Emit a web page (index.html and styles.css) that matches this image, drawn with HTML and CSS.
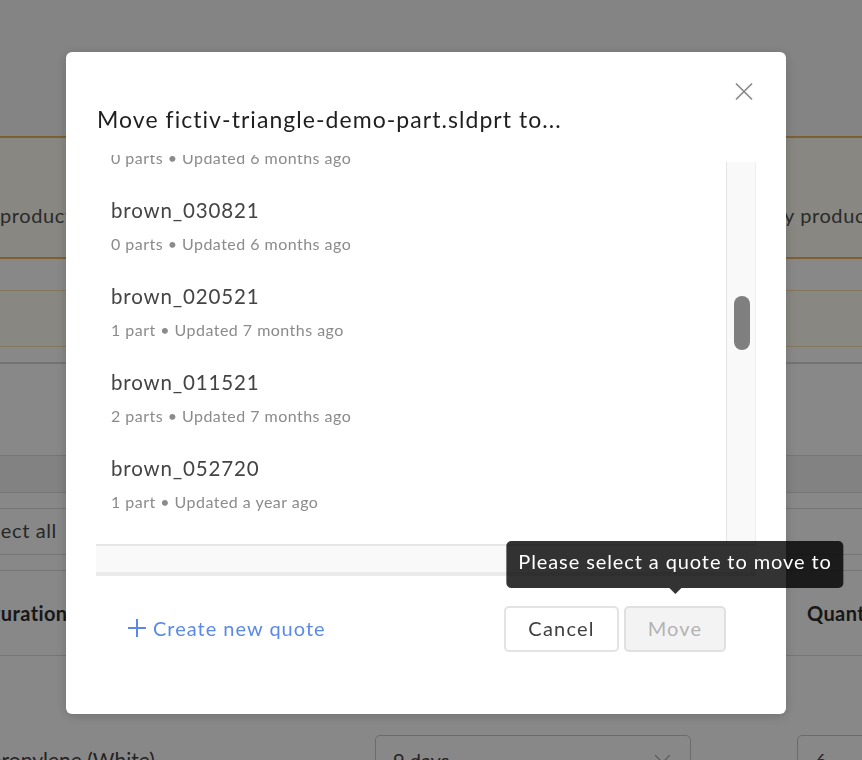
FILE: index.html
```html
<!DOCTYPE html>
<html>
<head>
<meta charset="utf-8">
<link rel="stylesheet" href="styles.css">
</head>
<body>
<div class="page">
  <div class="hdr"></div>
  <div class="banner banner-main">
    <span class="banner-left">production parts</span>
    <span class="banner-right">y production ready</span>
  </div>
  <div class="spacer s31"></div>
  <div class="banner banner-sub"></div>
  <div class="spacer s15"></div>
  <div class="section-line"></div>
  <div class="spacer s91"></div>
  <div class="band"></div>
  <div class="spacer s15"></div>
  <div class="sel-row"><span class="sel-text">Select all</span></div>
  <div class="spacer s15"></div>
  <div class="thead">
    <span class="th-config">Configuration</span>
    <span class="th-qty">Quantity</span>
  </div>
  <div class="prow">
    <span class="mat">Polypropylene (White)</span>
    <div class="select">9 days<span class="chev"></span></div>
    <div class="qty">6</div>
  </div>
</div>

<div class="overlay">
  <div class="modal">
    <div class="modal-head">
      <h1 class="title">Move fictiv-triangle-demo-part.sldprt to...</h1>
      <button class="close" aria-label="Close">
        <svg width="18" height="19" viewBox="0 0 18 19"><path d="M1 1.5 L17 17.5 M17 1.5 L1 17.5" stroke="#8a8a8a" stroke-width="1.7" fill="none"/></svg>
      </button>
    </div>
    <div class="list-frame">
      <div class="list">
        <div class="list-inner">
          <div class="item"><div class="name">brown_031521</div><div class="meta">0 parts • Updated 6 months ago</div></div>
          <div class="item"><div class="name">brown_030821</div><div class="meta">0 parts • Updated 6 months ago</div></div>
          <div class="item"><div class="name">brown_020521</div><div class="meta">1 part • Updated 7 months ago</div></div>
          <div class="item"><div class="name">brown_011521</div><div class="meta">2 parts • Updated 7 months ago</div></div>
          <div class="item"><div class="name">brown_052720</div><div class="meta">1 part • Updated a year ago</div></div>
        </div>
      </div>
      <div class="vtrack"><div class="vthumb"></div></div>
      <div class="hbar"></div>
    </div>
    <div class="modal-foot">
      <a class="create">
        <svg width="18" height="18" viewBox="0 0 18 18"><path d="M9 0 V18 M0 9 H18" stroke="#5b8ae6" stroke-width="2" fill="none"/></svg>
        <span>Create new quote</span>
      </a>
      <div class="actions">
        <button class="btn btn-cancel">Cancel</button>
        <button class="btn btn-move">Move
          <span class="tooltip">Please select a quote to move to</span>
        </button>
      </div>
    </div>
  </div>
</div>
</body>
</html>
```
FILE: styles.css
```css
html, body {
  margin: 0;
  padding: 0;
}
body {
  width: 862px;
  height: 760px;
  overflow: hidden;
  background: #ffffff;
  font-family: Lato, "Open Sans", "Liberation Sans", sans-serif;
}

/* ---------- background page ---------- */
.page {
  width: 862px;
  height: 760px;
  overflow: hidden;
  color: #555;
  font-size: 20px;
}
.hdr {
  height: 136px;
  background: #f8f8fa;
}
.banner {
  background: #fffdf3;
  box-sizing: border-box;
}
.banner-main {
  height: 123px;
  border-top: 2px solid #ecb55c;
  border-bottom: 2px solid #ecb55c;
  display: flex;
  white-space: nowrap;
  padding-top: 65px;
  line-height: 24px;
  color: #505050;
  letter-spacing: 0.6px;
}
.banner-left {
  flex: 0 0 784px;
  overflow: hidden;
}
.banner-right {
  flex: 0 0 auto;
}
.banner-sub {
  height: 57px;
  border-top: 1px solid #f4dfae;
  border-bottom: 1px solid #f4dfae;
}
.spacer.s31 { height: 31px; }
.spacer.s15 { height: 15px; }
.spacer.s91 { height: 91px; }
.section-line {
  height: 2px;
  background: #d8d8d8;
}
.band {
  height: 38px;
  box-sizing: border-box;
  background: #f3f3f4;
  border-top: 1px solid #dcdcdc;
  border-bottom: 1px solid #dcdcdc;
}
.sel-row {
  height: 47px;
  box-sizing: border-box;
  border-top: 1px solid #dcdcdc;
  border-bottom: 1px solid #dcdcdc;
  display: flex;
  align-items: center;
  white-space: nowrap;
  padding-bottom: 4px;
}
.sel-text {
  margin-left: -27px;
  color: #4a4a4a;
  letter-spacing: 0.6px;
}
.thead {
  height: 86px;
  box-sizing: border-box;
  border-top: 1px solid #dcdcdc;
  border-bottom: 1px solid #dcdcdc;
  display: flex;
  align-items: center;
  white-space: nowrap;
  font-weight: 700;
  color: #2e2e2e;
  letter-spacing: 0.4px;
}
.th-config {
  flex: 0 0 749px;
  margin-left: -60px;
}
.th-qty {
  flex: none;
  margin-left: 118px;
}
.prow {
  display: flex;
  align-items: flex-start;
  white-space: nowrap;
  padding-top: 79px;
}
.mat {
  flex: 0 0 375px;
  margin-left: -50px;
  padding-top: 12px;
  font-size: 21px;
  color: #444;
}
.select {
  flex: none;
  box-sizing: border-box;
  width: 316px;
  height: 44px;
  margin-left: 50px;
  border: 1px solid #c9c9c9;
  border-radius: 5px;
  padding: 12px 0 0 17px;
  color: #444;
  display: flex;
}
.chev {
  width: 10px;
  height: 10px;
  border-right: 1.5px solid #999;
  border-bottom: 1.5px solid #999;
  transform: rotate(45deg);
  margin: 2px 0 0 auto;
  margin-right: 22px;
}
.qty {
  flex: none;
  box-sizing: border-box;
  width: 90px;
  height: 44px;
  margin-left: 106px;
  border: 1px solid #c9c9c9;
  border-radius: 5px;
  padding: 12px 0 0 17px;
  color: #444;
}

/* ---------- overlay / modal ---------- */
.overlay {
  position: fixed;
  inset: 0;
  background: rgba(0, 0, 0, 0.465);
}
.modal {
  box-sizing: border-box;
  width: 720px;
  height: 662px;
  margin: 52px 0 0 66px;
  background: #fff;
  border-radius: 6px;
  box-shadow: 0 2px 12px rgba(0, 0, 0, 0.18);
  display: flex;
  flex-direction: column;
}
.modal-head {
  display: flex;
  justify-content: space-between;
  align-items: flex-start;
  padding: 30px 33px 0 31px;
}
.title {
  margin: 23px 0 0 0;
  font-size: 23px;
  line-height: 28px;
  font-weight: 400;
  color: #1f1f1f;
  letter-spacing: 1.05px;
  white-space: nowrap;
}
.close {
  border: 0;
  padding: 0;
  margin: 0;
  background: none;
  width: 18px;
  height: 19px;
  display: block;
}
.close svg { display: block; }

.list-frame {
  margin: 22px 30px 0 30px;
  display: grid;
  grid-template-columns: 630px 30px;
  grid-template-rows: 389px 32px;
}
.list {
  overflow: hidden;
}
.list-inner {
  margin-top: -59px;
  padding-left: 15px;
}
.item {
  padding: 16px 0 14px 0;
}
.name {
  font-size: 20.5px;
  line-height: 24px;
  color: #444;
  letter-spacing: 0.85px;
}
.meta {
  margin-top: 12px;
  font-size: 16px;
  line-height: 20px;
  color: #8b8b8b;
  letter-spacing: 0.47px;
}
.vtrack {
  margin-top: 7px;
  box-sizing: border-box;
  background: #f9f9f9;
  border-left: 1px solid #e6e6e6;
  border-right: 1px solid #efefef;
  padding: 134px 0 0 7px;
}
.vthumb {
  width: 16px;
  height: 54px;
  border-radius: 8px;
  background: #7f7f7f;
}
.hbar {
  grid-column: 1 / 3;
  box-sizing: border-box;
  background: #f9f9f9;
  border-top: 2px solid #e6e6e6;
  border-bottom: 4px solid #ebebeb;
}

.modal-foot {
  margin-top: 30px;
  height: 46px;
  display: flex;
  align-items: center;
  padding: 0 60px 0 62px;
}
.create {
  display: flex;
  align-items: center;
  gap: 7px;
  color: #5b8ae6;
  font-size: 20px;
  letter-spacing: 1px;
  cursor: pointer;
  margin-top: -3px;
}
.create svg { display: block; }
.actions {
  margin-left: auto;
  display: flex;
  gap: 5px;
}
.btn {
  box-sizing: border-box;
  height: 46px;
  border: 2px solid #e3e3e3;
  border-radius: 5px;
  background: #fff;
  font-family: Lato, "Open Sans", "Liberation Sans", sans-serif;
  font-size: 20px;
  letter-spacing: 1.2px;
  padding: 0 0 2px 0;
}
.btn-cancel {
  width: 115px;
  color: #3f3f3f;
}
.btn-move {
  width: 102px;
  color: #b3b3b3;
  background: #f3f3f3;
  border-color: #e0e0e0;
  position: relative;
}
.tooltip {
  position: absolute;
  bottom: calc(100% + 20px);
  left: 50%;
  transform: translateX(-50%);
  white-space: nowrap;
  background: rgba(0, 0, 0, 0.8);
  color: #fff;
  height: 47px;
  box-sizing: border-box;
  line-height: 40px;
  padding: 0 12px 7px 12px;
  border-radius: 5px;
  font-size: 20px;
  letter-spacing: 0.9px;
}
.tooltip::after {
  content: "";
  position: absolute;
  top: 100%;
  left: 50%;
  margin-left: -6px;
  border-left: 6px solid transparent;
  border-right: 6px solid transparent;
  border-top: 6px solid rgba(0, 0, 0, 0.8);
}
```
